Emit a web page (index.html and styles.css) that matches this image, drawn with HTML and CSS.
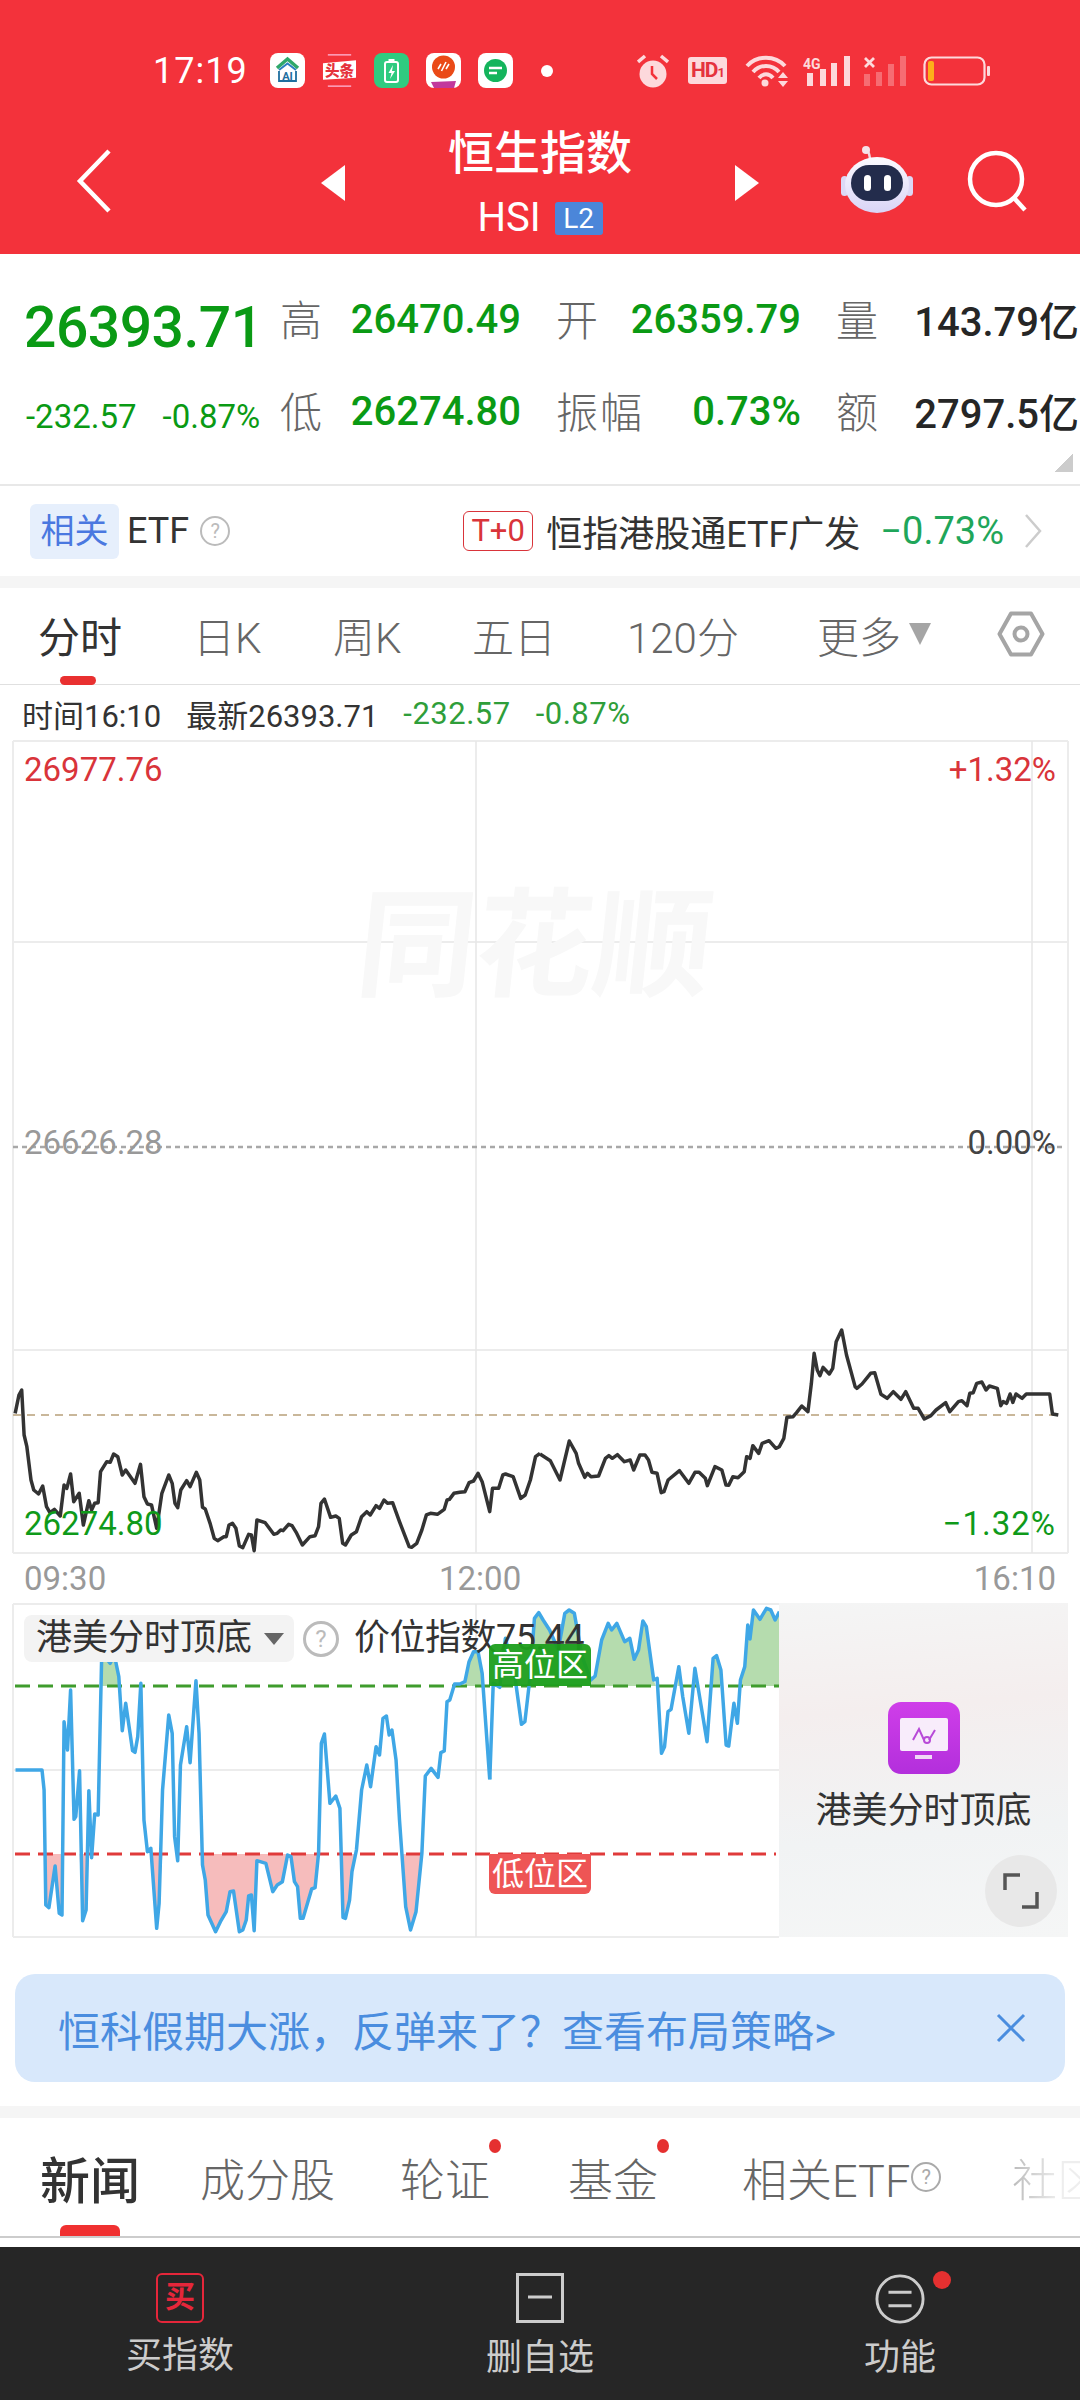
FILE: index.html
```html
<!DOCTYPE html>
<html lang="zh">
<head>
<meta charset="utf-8">
<title>恒生指数</title>
<link rel="stylesheet" href="styles.css">
</head>
<body>
<div class="screen">
  <header class="topbar">
    <div class="status">
      <span class="clock">17:19</span>
      <div class="apps">
        <svg class="app" viewBox="0 0 35 35"><rect width="35" height="35" rx="8" fill="#fff"/><path d="M7 15 L17.5 6 L28 15" fill="none" stroke="#2fa86a" stroke-width="3.5"/><path d="M9 17 L17.5 10.5 L26 17" fill="none" stroke="#2b7fc0" stroke-width="2"/><path d="M9 18 V28 H26 V18" fill="none" stroke="#1f6f9f" stroke-width="1.8"/><text x="17.5" y="26.5" class="app-ai">AI</text></svg>
        <svg class="app" viewBox="0 0 36 35"><path d="M6 1.5 H30 M6 33.5 H30" stroke="#fbd" stroke-width="1.2"/><path d="M1 10 L35 7 V25 L1 27 Z" fill="#fff"/><text x="18" y="23" class="app-tt">头条</text></svg>
        <svg class="app" viewBox="0 0 35 35"><rect width="35" height="35" rx="8" fill="#2fcb80"/><rect x="11" y="9" width="13" height="20" rx="2" fill="none" stroke="#fff" stroke-width="2"/><rect x="14.500" y="6" width="6" height="3" fill="#fff"/><path d="M19 12 L14.500 20 H17.500 L16 26 L21 18 H18 Z" fill="#fff"/></svg>
        <svg class="app" viewBox="0 0 35 35"><rect width="35" height="35" rx="8" fill="#fff"/><circle cx="17.500" cy="14" r="11.500" fill="#ea4a17"/><path d="M12 16 L15 11 M15.500 18 L20 9 M20 16 L23 11" stroke="#fff" stroke-width="1.6"/><path d="M5 29 L30 28 L28 35 H8 Z" fill="#c2389c"/></svg>
        <svg class="app" viewBox="0 0 35 35"><rect width="35" height="35" rx="8" fill="#fff"/><circle cx="17.500" cy="17.500" r="11.500" fill="#14b45c"/><path d="M11 15 H24 M11 20 H19" stroke="#fff" stroke-width="2.500"/></svg>
      </div>
      <span class="sdot"></span>
      <div class="sys">
        <svg class="s-alarm" viewBox="0 0 32 34"><circle cx="16" cy="20" r="13.500" fill="#fdd9dc"/><path d="M15 12 V20 L20 25" fill="none" stroke="#f3323b" stroke-width="2.500"/><path d="M1 8 L8 2 M31 8 L24 2" stroke="#fdd9dc" stroke-width="3.500"/></svg>
        <span class="s-hd">HD<small>1</small></span>
        <svg class="s-wifi" viewBox="0 0 45 33"><path d="M2 12 C12 1 30 1 40 12 M8 18 C15 10 27 10 34 18 M14 24 C18 19 24 19 28 24" fill="none" stroke="#fdd9dc" stroke-width="4"/><circle cx="20" cy="29" r="3.500" fill="#fdd9dc"/><path d="M33 24 L38 18 L43 24 Z M33 27 H43 L38 33 Z" fill="#fdd9dc"/></svg>
        <svg class="s-sig" viewBox="0 0 47 31"><text x="0" y="14" class="s-4g">4G</text><path d="M4 18 H10 V31 H4 Z M17 14 H23 V31 H17 Z M28 8 H34 V31 H28 Z M41 1 H47 V31 H41 Z" fill="#fdd9dc"/></svg>
        <svg class="s-sig2" viewBox="0 0 44 31"><path d="M1 3 L10 12 M10 3 L1 12" stroke="#fdd9dc" stroke-width="2.800"/><path d="M0 19 H6 V31 H0 Z M12 17 H18 V31 H12 Z M24 9 H30 V31 H24 Z M36 1 H42 V31 H36 Z" fill="#fdd9dc" opacity=".35"/></svg>
        <svg class="s-bat" viewBox="0 0 67 30"><rect x="1.500" y="1.500" width="60" height="27" rx="7" fill="none" stroke="#fdd9dc" stroke-width="2.200"/><rect x="5" y="5" width="6" height="20" rx="2" fill="#fdae1a"/><rect x="64" y="10" width="3" height="10" rx="1" fill="#fdd9dc"/></svg>
      </div>
    </div>
    <nav class="nav">
      <svg class="n-back" viewBox="0 0 36 64"><path d="M33 2 L4 32 L33 62" fill="none" stroke="#fff" stroke-width="4.500"/></svg>
      <svg class="n-prev" viewBox="0 0 24 36"><path d="M24 0 V36 L0 18 Z" fill="#fff"/></svg>
      <div class="n-title">
        <h1>恒生指数</h1>
        <div class="n-sub"><span>HSI</span><b>L2</b></div>
      </div>
      <svg class="n-next" viewBox="0 0 24 36"><path d="M0 0 V36 L24 18 Z" fill="#fff"/></svg>
      <svg class="n-bot" viewBox="0 0 72 68"><defs><linearGradient id="botg" x1="0" y1="0" x2="0" y2="1"><stop offset="0" stop-color="#fbfaff"/><stop offset="1" stop-color="#d9d4f6"/></linearGradient></defs><path d="M29 14 C28 3 22 4 25 7" fill="none" stroke="#f3d8e0" stroke-width="2.500"/><circle cx="25" cy="5" r="4" fill="#f5e3ea"/><rect x="0" y="31" width="7" height="20" rx="3.500" fill="#dcd8f5"/><rect x="65" y="31" width="7" height="20" rx="3.500" fill="#dcd8f5"/><ellipse cx="36" cy="40" rx="32" ry="28" fill="url(#botg)"/><rect x="10" y="20" width="52" height="36" rx="18" fill="#232c4c"/><rect x="23" y="30" width="7" height="16" rx="3.500" fill="#fff"/><rect x="43" y="30" width="7" height="16" rx="3.500" fill="#fff"/></svg>
      <svg class="n-search" viewBox="0 0 62 62"><circle cx="29" cy="29" r="26" fill="none" stroke="#fff" stroke-width="4.500"/><path d="M47 48 L58 60" stroke="#fff" stroke-width="4.500"/></svg>
    </nav>
  </header>

  <section class="quote">
    <div class="q-grid">
      <div class="q-price">26393.71</div>
      <div class="q-cell"><span class="q-l">高</span><span class="q-v g">26470.49</span></div>
      <div class="q-cell"><span class="q-l">开</span><span class="q-v g">26359.79</span></div>
      <div class="q-cell q-last"><span class="q-l">量</span><span class="q-v k">143.79亿</span></div>
      <div class="q-chg"><span>-232.57</span><span>-0.87%</span></div>
      <div class="q-cell"><span class="q-l">低</span><span class="q-v g">26274.80</span></div>
      <div class="q-cell"><span class="q-l">振幅</span><span class="q-v g">0.73%</span></div>
      <div class="q-cell q-last"><span class="q-l">额</span><span class="q-v k">2797.5亿</span></div>
    </div>
    <div class="q-corner"><i></i></div>
  </section>

  <section class="etf">
    <span class="e-chip">相关</span>
    <span class="e-name">ETF</span>
    <span class="help e-help">?</span>
    <span class="e-t0">T+0</span>
    <span class="e-fund">恒指港股通ETF广发</span>
    <span class="e-pct">−0.73%</span>
    <svg class="e-arrow" viewBox="0 0 18 34"><path d="M2 1 L16 17 L2 33" fill="none" stroke="#ccc" stroke-width="2.500"/></svg>
  </section>

  <div class="band"></div>

  <div class="tabs">
    <span class="tab active">分时</span>
    <span class="tab">日K</span>
    <span class="tab">周K</span>
    <span class="tab">五日</span>
    <span class="tab">120分</span>
    <span class="tab tab-more">更多<i></i></span>
    <svg class="tab-hex" viewBox="0 0 48 46"><path d="M14 2.500 H34 L45.500 23 L34 43.500 H14 L2.500 23 Z" fill="none" stroke="#a5a5a5" stroke-width="4" stroke-linejoin="round"/><circle cx="24" cy="23" r="6.500" fill="none" stroke="#a5a5a5" stroke-width="4"/></svg>
  </div>

  <div class="info">
    <span>时间16:10</span>
    <span>最新26393.71</span>
    <span class="ig">-232.57</span>
    <span class="ig">-0.87%</span>
  </div>

  <section class="chart">
    <svg class="c-svg" viewBox="0 732 1080 871">
      <g class="c-grid">
        <path d="M13 741 H1068 M13 942 H1068 M13 1350 H1068 M13 1553 H1068 M13 741 V1553 M1068 741 V1553"/>
        <path class="c-v" d="M476 741 V1553 M1032 741 V1553"/>
      </g>
      <path class="c-mid" d="M13 1147 H1062"/>
      <path class="c-prev" d="M13 1415 H1063"/>
      <g transform="translate(0 1280) scale(.34439 .33333)">
        <polyline class="c-line" points="44,400 55,345 63,330 70,465 78,500 90,600 98,630 112,642 124,618 135,680 145,698 158,688 175,708 186,615 194,625 205,582 214,665 230,640 242,735 258,662 266,690 275,670 285,668 292,575 310,545 320,547 330,522 342,530 355,585 365,570 392,610 408,553 418,650 428,672 440,675 455,745 470,640 490,585 500,610 508,670 516,683 525,630 542,602 552,620 570,577 580,600 588,682 596,687 610,730 622,775 632,782 650,770 657,770 665,735 675,730 685,745 695,798 705,803 722,763 730,765 738,812 746,720 770,728 795,763 805,760 815,750 822,752 838,733 848,737 860,757 878,795 900,770 915,767 925,740 932,670 942,657 960,712 975,708 985,715 995,790 1003,795 1020,765 1035,755 1050,710 1065,695 1075,705 1092,677 1102,685 1115,660 1125,670 1140,668 1160,725 1188,800 1195,802 1210,790 1225,750 1238,705 1250,700 1270,703 1290,688 1298,660 1305,658 1318,640 1335,637 1350,635 1362,608 1375,603 1388,580 1400,605 1422,695 1430,625 1448,625 1460,585 1468,582 1490,590 1512,655 1525,645 1540,600 1555,530 1568,520"/>
      </g>
      <g transform="translate(540 1280) scale(.34439 .33333)">
        <polyline class="c-line" points="0,522 30,542 58,600 85,483 105,520 112,550 130,592 138,580 148,590 170,588 190,535 200,527 210,535 225,524 245,545 262,540 272,570 290,525 305,525 315,540 325,577 340,580 352,638 360,635 372,600 405,572 432,610 450,577 462,577 480,595 486,617 508,560 528,570 540,615 548,616 560,590 575,593 593,575 600,530 610,535 618,497 635,520 645,490 665,482 685,505 695,500 708,475 717,412 735,410 745,398 760,378 778,395 788,310 796,220 805,270 813,287 822,262 840,282 850,265 860,185 876,150 890,225 915,320 920,325 935,312 960,280 972,278 990,343 1008,355 1026,335 1048,358 1062,335 1085,385 1098,385 1116,417 1135,407 1150,390 1178,368 1190,395 1215,365 1225,362 1240,377 1248,340 1258,338 1268,310 1283,306 1295,330 1305,318 1328,325 1338,377 1345,365 1355,370 1365,342 1373,367 1382,342 1400,355 1412,342 1480,342 1488,402 1505,405"/>
      </g>
    </svg>
    <div class="c-mark">同花顺</div>
    <span class="c-lab c-tl red">26977.76</span>
    <span class="c-lab c-tr red">+1.32%</span>
    <span class="c-lab c-ml gray">26626.28</span>
    <span class="c-lab c-mr dark">0.00%</span>
    <span class="c-lab c-bl grn">26274.80</span>
    <span class="c-lab c-br grn">−1.32%</span>
    <span class="c-lab c-t1 gray">09:30</span>
    <span class="c-lab c-t2 gray">12:00</span>
    <span class="c-lab c-t3 gray">16:10</span>
  </section>

  <section class="ind">
    <svg class="i-svg" viewBox="0 1603 779 337">
      <defs>
        <clipPath id="clipLow"><rect x="0" y="1854" width="779" height="90"/></clipPath>
        <clipPath id="clipHigh"><rect x="0" y="1603" width="779" height="83"/></clipPath>
      </defs>
      <path class="c-gridline" d="M13 1604 H779 M13 1770 H779 M13 1937 H779 M13 1604 V1937"/>
      <path class="c-gridline c-v" d="M476 1604 V1937"/>
      <g clip-path="url(#clipLow)">
        <g transform="translate(0 1590) scale(.34439 .33333)">
          <polygon class="f-low" points="128,790 133,945 142,953 160,828 172,970 180,975 186,790"/>
          <polygon class="f-low" points="231,790 240,992 250,960 258,790"/>
          <polygon class="f-low" points="438,790 455,1015 462,940 472,790"/>
          <polygon class="f-low" points="585,790 588,825 596,870 604,975 626,1025 640,995 657,965 668,905 678,903 695,1025 705,1020 715,990 722,918 730,915 738,1022 746,812 772,820 792,905 805,885 820,875 835,795 845,800 855,875 864,890 872,985 880,985 905,897 915,893 925,790"/>
          <polygon class="f-low" points="990,790 996,982 1003,985 1015,930 1022,845 1035,790"/>
          <polygon class="f-low" points="1168,790 1178,950 1192,1020 1208,965 1225,790"/>
        </g>
      </g>
      <g clip-path="url(#clipHigh)">
        <g transform="translate(0 1590) scale(.34439 .33333)">
          <polygon class="f-high" points="291,288 295,210 305,200 320,220 332,195 345,260 349,288"/>
          <polygon class="f-high" points="1350,288 1362,215 1375,185 1388,185 1400,250 1405,288"/>
        </g>
        <g transform="translate(400 1590) scale(.43367 .33333)">
          <polygon class="f-high" points="265,288 265,260 270,288"/>
          <polygon class="f-high" points="300,288 300,260 310,85 320,68 330,90 345,120 365,180 380,70 390,60 402,70 420,200 440,270 450,258 465,150 480,100 488,120 500,100 518,155 530,145 540,208 550,180 560,93 568,110 585,270 590,288"/>
          <polygon class="f-high" points="640,288 643,230 650,288"/>
          <polygon class="f-high" points="677,288 680,235 690,288"/>
          <polygon class="f-high" points="716,288 722,205 730,197 740,240 745,288"/>
          <polygon class="f-high" points="783,288 785,270 795,230 802,105 807,147 815,60 830,88 845,55 855,60 865,90 875,65 875,288"/>
        </g>
      </g>
      <path class="d-high" d="M15 1686 H779"/>
      <path class="d-low" d="M15 1854 H776"/>
      <g transform="translate(0 1590) scale(.34439 .33333)">
        <polyline class="i-line" points="45,540 122,540 128,600 133,945 142,953 160,828 172,970 180,975 186,395 196,480 205,300 215,688 220,680 231,542 240,992 250,960 258,602 266,803 275,672 285,675 295,210 305,200 320,220 332,195 345,260 355,422 365,340 385,482 392,487 400,440 409,280 418,690 428,785 438,775 455,1015 462,940 472,600 490,375 500,430 507,740 516,812 524,525 542,410 552,518 569,272 578,430 588,825 596,870 604,975 626,1025 640,995 657,965 668,905 678,903 695,1025 705,1020 715,990 722,918 730,915 738,1022 746,812 772,820 792,905 805,885 820,875 835,795 845,800 855,875 864,890 872,985 880,985 905,897 915,893 925,790 933,460 942,432 958,640 975,618 987,655 996,982 1003,985 1015,930 1022,845 1035,780 1050,600 1065,525 1076,590 1092,470 1102,495 1112,385 1122,378 1130,435 1138,420 1150,510 1160,690 1178,950 1192,1020 1208,965 1225,790 1235,558 1252,535 1272,562 1280,488 1290,483 1298,335 1306,330 1320,282 1335,282 1350,275 1362,215 1375,185 1388,185 1400,250 1422,568"/>
      </g>
      <g transform="translate(400 1590) scale(.43367 .33333)">
        <polyline class="i-line" points="207,568 215,280 230,292 243,145 265,260 280,403 288,395 300,260 310,85 320,68 330,90 345,120 365,180 380,70 390,60 402,70 420,200 440,270 450,258 465,150 480,100 488,120 500,100 518,155 530,145 540,208 550,180 560,93 568,110 585,270 593,265 603,490 610,470 618,365 625,358 643,230 652,320 666,430 680,235 708,455 722,205 730,197 740,240 752,465 758,468 770,340 778,400 785,270 795,230 802,105 807,147 815,60 830,88 845,55 855,60 865,90 875,65"/>
      </g>
    </svg>
    <aside class="panel">
      <svg class="p-icon" viewBox="0 0 72 72"><defs><linearGradient id="pg" x1="0" y1="0" x2="0" y2="1"><stop offset="0" stop-color="#cf3ee9"/><stop offset="1" stop-color="#b32fdc"/></linearGradient></defs><rect width="72" height="72" rx="13" fill="url(#pg)"/><rect x="12" y="16" width="48" height="33" rx="2" fill="#f8ecfb"/><rect x="27" y="53" width="17" height="4" fill="#f0d8f6"/><path d="M25 38 L31 27 L36 38 M41 38 L47 28" fill="none" stroke="#b84ad8" stroke-width="2"/><circle cx="39" cy="38" r="3" fill="none" stroke="#b84ad8" stroke-width="2"/></svg>
      <div class="p-name">港美分时顶底</div>
      <button class="p-expand" aria-label="expand"><svg viewBox="0 0 38 38"><path d="M18 3 H3 V18 M20 35 H35 V20" fill="none" stroke="#555" stroke-width="3.500"/></svg></button>
    </aside>
    <div class="i-head">
      <span class="i-pill">港美分时顶底<i></i></span>
      <span class="help i-help">?</span>
      <span class="i-val">价位指数75.44</span>
    </div>
    <span class="tag tag-hi">高位区</span>
    <span class="tag tag-lo">低位区</span>
  </section>

  <div class="banner">
    <span>恒科假期大涨，反弹来了？查看布局策略&gt;</span>
    <svg class="b-x" viewBox="0 0 30 30"><path d="M2 2 L28 28 M28 2 L2 28" stroke="#4a8ddf" stroke-width="3"/></svg>
  </div>

  <div class="band band2"></div>

  <div class="tabs2">
    <span class="t2 t2-on">新闻</span>
    <span class="t2">成分股</span>
    <span class="t2 t2-dot">轮证</span>
    <span class="t2 t2-dot">基金</span>
    <span class="t2 t2-etf">相关ETF<span class="help t2-help">?</span></span>
    <span class="t2 t2-fade">社区</span>
  </div>

  <footer class="bottom">
    <div class="b-item">
      <span class="b-buy">买</span>
      <span class="b-label">买指数</span>
    </div>
    <div class="b-item b-del">
      <svg class="b-icon" viewBox="0 0 48 50"><rect x="1.500" y="1.500" width="45" height="47" fill="none" stroke="#ccc" stroke-width="3"/><path d="M12 24 H36" stroke="#ccc" stroke-width="3"/></svg>
      <span class="b-label">删自选</span>
    </div>
    <div class="b-item b-func">
      <svg class="b-icon" viewBox="0 0 52 52"><circle cx="26" cy="26" r="24" fill="none" stroke="#ccc" stroke-width="3"/><path d="M14 19 H38 M14 33 H38" stroke="#ccc" stroke-width="3"/></svg>
      <span class="b-label">功能</span>
      <i class="b-dot"></i>
    </div>
  </footer>
</div>
</body>
</html>
```
FILE: styles.css
```css
* { box-sizing: border-box; margin: 0; padding: 0; }
html, body { width: 1080px; height: 2400px; overflow: hidden; background: #fff; }
body { font-family: Roboto, "Noto Sans CJK SC", sans-serif; color: #333; }
svg { display: block; flex: none; }
i { font-style: normal; }
.screen { width: 1080px; height: 2400px; display: flex; flex-direction: column; overflow: hidden; }

/* header */
.topbar { height: 254px; background: #f3323b; padding-top: 53px; color: #fff; flex: none; }
.status { height: 35px; display: flex; align-items: center; padding-left: 153px; }
.clock { font-size: 36px; line-height: 36px; letter-spacing: 1px; width: 117px; }
.apps { display: flex; gap: 17px; }
.app { width: 35px; height: 35px; }
.app-ai { font: 700 11px Roboto, sans-serif; fill: #1f6f9f; text-anchor: middle; }
.app-tt { font: 900 15px "Noto Sans CJK SC", sans-serif; fill: #e5323c; text-anchor: middle; }
.sdot { width: 12px; height: 12px; border-radius: 50%; background: #fff; margin-left: 28px; }
.sys { display: flex; align-items: center; margin-left: 84px; }
.s-alarm { width: 32px; height: 34px; }
.s-hd { width: 39px; height: 27px; margin-left: 19px; background: #fdd9dc; border-radius: 3px; color: #e5323c; font: 700 21px/27px Roboto, sans-serif; text-align: center; letter-spacing: -1px; }
.s-hd small { font-size: 13px; }
.s-wifi { width: 45px; height: 33px; margin-left: 18px; }
.s-sig { width: 47px; height: 31px; margin-left: 13px; }
.s-4g { font: 700 14px Roboto, sans-serif; fill: #fdd9dc; }
.s-sig2 { width: 44px; height: 31px; margin-left: 14px; }
.s-bat { width: 67px; height: 30px; margin-left: 15px; }

.nav { margin-top: 42px; height: 115px; display: flex; align-items: center; padding-left: 76px; }
.n-back { width: 36px; height: 64px; margin-bottom: 14px; }
.n-prev { width: 24px; height: 36px; margin-left: 209px; margin-bottom: 10px; }
.n-next { width: 24px; height: 36px; margin-bottom: 10px; }
.n-title { width: 390px; display: flex; flex-direction: column; align-items: center; align-self: flex-start; margin-top: -5px; }
.n-title h1 { font-size: 46px; line-height: 56px; font-weight: 500; }
.n-sub { display: flex; align-items: center; gap: 14px; margin-top: 20px; height: 34px; }
.n-sub span { font-size: 40px; line-height: 34px; }
.n-sub b { width: 48px; height: 33px; background: #4b86d9; border-radius: 3px; font-size: 28px; line-height: 33px; font-weight: 400; text-align: center; }
.n-bot { width: 72px; height: 68px; margin-left: 82px; margin-bottom: 18px; }
.n-search { width: 62px; height: 62px; margin-left: 54px; margin-bottom: 14px; }

/* quote */
.quote { height: 232px; border-bottom: 2px solid #e8e8e8; flex: none; padding-top: 20px; }
.q-grid { display: grid; grid-template-columns: 258px 276px 280px 239px; grid-auto-rows: 92px; padding-left: 24px; align-items: center; }
.q-price { font-size: 57px; line-height: 92px; font-weight: 500; color: #0a9a14; margin-top: 16px; letter-spacing: -.5px; }
.q-chg { display: flex; gap: 26px; font-size: 33px; color: #0a9a14; padding-left: 2px; margin-top: 8px; }
.q-cell { display: flex; justify-content: space-between; align-items: center; padding-right: 37px; }
.q-last { padding-right: 0; }
.q-l { font-size: 42px; color: #666; font-weight: 300; margin: -6px 0 0 -2px; letter-spacing: 2px; }
.q-v { font-size: 40px; font-weight: 500; margin-top: -2px; }
.q-v.g { color: #0a9a14; }
.q-v.k { color: #262626; font-size: 40px; margin-right: -2px; }
.q-corner { display: flex; justify-content: flex-end; padding-right: 7px; margin-top: -4px; }
.q-corner i { width: 18px; height: 18px; background: linear-gradient(135deg, transparent 50%, #ccc 50%); }

/* etf */
.etf { height: 90px; flex: none; display: flex; align-items: center; padding-left: 30px; padding-right: 38px; }
.e-chip { width: 89px; height: 55px; background: #e6effc; border-radius: 6px; color: #4a78e0; font-size: 34px; line-height: 55px; text-align: center; }
.e-name { font-size: 36px; margin-left: 8px; color: #333; }
.help { display: inline-block; border: 2px solid #bbb; border-radius: 50%; color: #bbb; text-align: center; font-weight: 400; }
.e-help { width: 30px; height: 30px; font-size: 20px; line-height: 26px; margin-left: 11px; }
.e-t0 { width: 70px; height: 40px; margin-left: auto; border: 1.5px solid #d9343a; border-radius: 6px; color: #d9343a; font-size: 31px; line-height: 37px; text-align: center; }
.e-fund { margin-left: 13px; font-size: 36px; color: #333; }
.e-pct { margin-left: 20px; font-size: 38px; color: #1fa65a; }
.e-arrow { width: 18px; height: 34px; margin-left: 20px; }

.band { height: 12px; background: #f5f5f5; flex: none; }

/* period tabs */
.tabs { height: 97px; flex: none; display: grid; grid-template-columns: 155px 140px 139px 155px 190px 180px 1fr; align-items: center; padding-left: 38px; border-bottom: 1px solid #e0e0e0; padding-bottom: 4px; }
.tab { font-size: 42px; color: #666; font-weight: 300; position: relative; display: flex; align-items: center; }
.tab.active { color: #333; font-weight: 400; }
.tab.active::after { content: ""; position: absolute; left: 22px; top: 72px; width: 36px; height: 9px; border-radius: 5px; background: #e93030; }
.tab-more i { width: 0; height: 0; margin-left: 8px; border-left: 11px solid transparent; border-right: 11px solid transparent; border-top: 22px solid #a5a5a5; }
.tab-hex { width: 48px; height: 46px; }

/* time info */
.info { height: 47px; flex: none; display: flex; align-items: center; padding-left: 22px; padding-top: 10px; gap: 25px; font-size: 31px; color: #333; }
.ig { color: #2f9e3a; letter-spacing: .5px; }

/* main chart */
.chart { height: 871px; position: relative; flex: none; }
.c-svg { width: 1080px; height: 871px; }
.c-grid path, .c-gridline { fill: none; stroke: #ececec; stroke-width: 2; }
.c-grid .c-v, .c-gridline.c-v { stroke: #e6e6e6; stroke-width: 1.500; }
.c-mid { stroke: #a8a8a8; stroke-width: 2.500; stroke-dasharray: 5 4; fill: none; }
.c-prev { stroke: #c9b79a; stroke-width: 2; stroke-dasharray: 8 6; fill: none; }
.c-line { fill: none; stroke: #333; stroke-width: 3.500; stroke-linejoin: round; vector-effect: non-scaling-stroke; }
.c-mark { position: absolute; left: 358px; top: 150px; font-size: 118px; line-height: 130px; font-weight: 700; color: #f8f8f8; transform: skewX(-6deg); }
.c-lab { position: absolute; font-size: 33px; line-height: 32px; }
.red { color: #d9343a; }
.gray { color: #999; }
.dark { color: #444; }
.grn { color: #0f9a1a; }
.c-tl { left: 24px; top: 22px; }
.c-tr { right: 24px; top: 22px; }
.c-ml { left: 24px; top: 395px; }
.c-mr { right: 24px; top: 395px; }
.c-bl { left: 24px; top: 776px; }
.c-br { right: 24px; top: 776px; letter-spacing: 1px; }
.c-t1 { left: 24px; top: 831px; }
.c-t2 { left: 439px; top: 831px; }
.c-t3 { right: 24px; top: 831px; }

/* indicator */
.ind { height: 337px; flex: none; position: relative; display: flex; }
.i-svg { width: 779px; height: 337px; }
.f-low { fill: #f6bcbc; }
.f-high { fill: #b5dcae; }
.d-high { stroke: #3f9c2d; stroke-width: 3; stroke-dasharray: 15 8; fill: none; }
.d-low { stroke: #e03a3a; stroke-width: 3; stroke-dasharray: 15 8; fill: none; }
.i-line { fill: none; stroke: #3fa7e6; stroke-width: 3.500; stroke-linejoin: round; vector-effect: non-scaling-stroke; }
.panel { width: 289px; height: 334px; background: linear-gradient(175deg, #f4f5f5 0%, #f4eeee 32%, #f1f3f4 68%, #f5f6f6 100%); display: flex; flex-direction: column; align-items: center; padding-top: 99px; position: relative; }
.p-icon { width: 72px; height: 72px; }
.p-name { font-size: 36px; line-height: 40px; margin-top: 17px; color: #333; }
.p-expand { position: absolute; right: 11px; bottom: 10px; width: 72px; height: 72px; border: 0; border-radius: 50%; background: #e8e8e8; display: flex; align-items: center; justify-content: center; }
.p-expand svg { width: 38px; height: 38px; }
.i-head { position: absolute; left: 24px; top: 12px; display: flex; align-items: center; }
.i-pill { width: 270px; height: 47px; background: #f3f3f3; border-radius: 8px; padding-left: 12px; font-size: 36px; line-height: 47px; color: #333; display: flex; align-items: center; }
.i-pill i { width: 0; height: 0; margin-left: 12px; border-left: 10px solid transparent; border-right: 10px solid transparent; border-top: 12px solid #666; }
.i-help { width: 36px; height: 36px; font-size: 24px; line-height: 30px; margin-left: 9px; border-width: 3px; }
.i-val { font-size: 36px; margin-left: 15px; color: #333; line-height: 47px; letter-spacing: -.5px; }
.tag { position: absolute; left: 489px; width: 102px; color: #fff; font-size: 32px; text-align: center; }
.tag-hi { top: 41px; height: 42px; line-height: 42px; background: rgba(28, 158, 28, .95); border-radius: 6px 6px 0 0; }
.tag-lo { top: 251px; height: 40px; line-height: 40px; background: #ee5555; border-radius: 0 0 6px 6px; }

/* banner */
.banner { height: 108px; flex: none; margin: 34px 15px 0; background: #d8e8fb; border-radius: 20px; display: flex; align-items: center; padding-left: 43px; padding-right: 39px; justify-content: space-between; color: #4a8ddf; font-size: 42px; }
.b-x { width: 30px; height: 30px; }
.band2 { margin-top: 24px; }

/* news tabs */
.tabs2 { height: 120px; flex: none; display: grid; grid-template-columns: 160px 200px 168px 174px 270px 68px; padding-left: 40px; align-items: center; border-bottom: 2px solid #ccc; overflow: hidden; }
.t2 { font-size: 45px; color: #666; font-weight: 300; position: relative; white-space: nowrap; }
.t2-on { font-size: 50px; color: #333; font-weight: 500; }
.t2-on::after { content: ""; position: absolute; left: 20px; top: 84px; width: 60px; height: 12px; border-radius: 6px 6px 0 0; background: #f03030; }
.t2-dot::after { content: ""; position: absolute; left: 89px; top: -6px; width: 12px; height: 14px; border-radius: 50%; background: #e53030; }
.t2-etf { display: flex; align-items: center; }
.t2-help { width: 30px; height: 30px; font-size: 20px; line-height: 26px; margin-left: 1px; color: #aaa; border-color: #aaa; }
.t2-fade { background: linear-gradient(90deg, #bbb 0%, #eee 70%); -webkit-background-clip: text; background-clip: text; color: transparent; }

/* bottom bar */
.bottom { margin-top: 9px; flex: 1; background: #262626; display: grid; grid-template-columns: 360px 360px 360px; }
.b-item { display: flex; flex-direction: column; align-items: center; padding-top: 26px; position: relative; }
.b-buy { width: 48px; height: 50px; border: 2.500px solid #e5263a; border-radius: 6px; color: #e5263a; font-size: 30px; line-height: 44px; font-weight: 700; text-align: center; }
.b-icon { width: 48px; height: 50px; }
.b-func .b-icon { width: 50px; height: 52px; }
.b-label { font-size: 36px; color: #ccc; line-height: 46px; margin-top: 10px; font-weight: 400; }
.b-del .b-label { margin-top: 12px; }
.b-dot { position: absolute; left: 213px; top: 24px; width: 18px; height: 18px; border-radius: 50%; background: #e53030; }
```
